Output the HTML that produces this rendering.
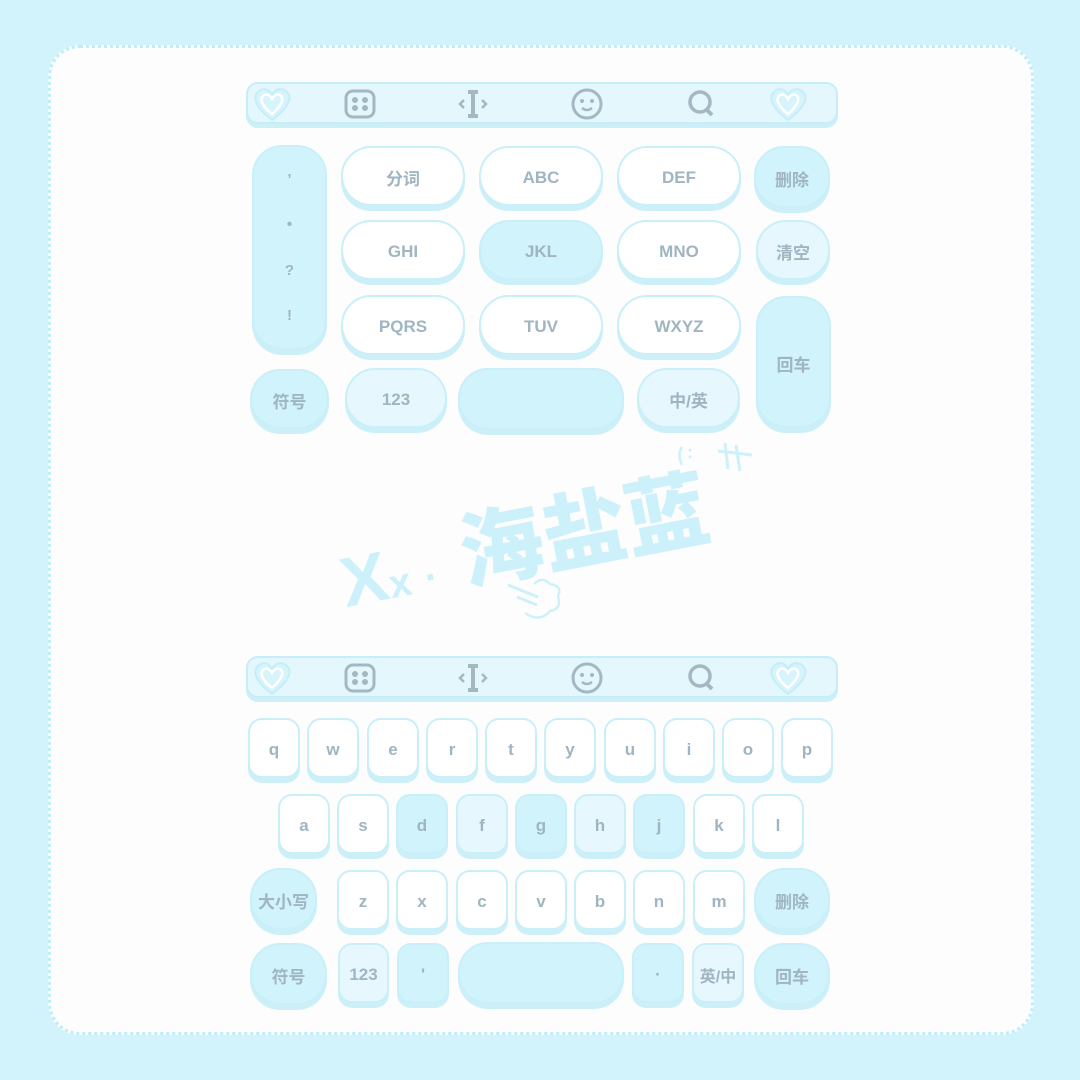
<!DOCTYPE html><html><head><meta charset="utf-8"><style>
body{margin:0;width:1080px;height:1080px;background:#d3f3fc;position:relative;overflow:hidden;font-family:"Liberation Sans","Noto Sans CJK SC",sans-serif;}
.card{position:absolute;left:48px;top:45px;width:980px;height:984px;background:#fdfdfd;border:3px dotted #bdeef9;border-radius:32px;}
.k{position:absolute;box-sizing:border-box;background:#fff;border:2px solid #c9eff9;box-shadow:0 5px 0 #cdeff8;border-radius:30px;display:flex;align-items:center;justify-content:center;color:#9fb5c1;font-weight:bold;font-size:17px;padding-top:3px;}
.b{background:#d0f3fc;}
.l{background:#e6f8fd;}
.s{border-radius:14px;font-size:17px;}
.bar{position:absolute;left:246px;width:592px;height:42px;box-sizing:border-box;background:#e3f7fd;border:2px solid #c6eef9;box-shadow:0 4px 0 #cdeff8;border-radius:12px;}
.wm{position:absolute;left:348px;color:#cdf1fb;font-weight:900;transform:rotate(-11deg);transform-origin:left bottom;white-space:nowrap;line-height:1;}
</style></head><body>
<div class="card"></div>

<svg width="0" height="0" style="position:absolute"><defs>
<g id="ht"><path d="M20 36C4 24 0 14 6 8c5-5 11-3 14 3c3-6 10-8 15-3c6 6 1 16-15 28z" fill="#d7f4fc" stroke="#c4eef9" stroke-width="2"/><path d="M20 30C9 21 8 15 11 12c3-3 7-1 9 3c2-4 6-6 9-3c3 3 1 9-9 18z" fill="none" stroke="#fff" stroke-width="2.5"/></g>
<g id="tb">
<rect x="92" y="9" width="28" height="26" rx="7" fill="none" stroke="#a3b8c3" stroke-width="3"/>
<circle cx="101" cy="18" r="3" fill="#a3b8c3"/><circle cx="111" cy="18" r="3" fill="#a3b8c3"/><circle cx="101" cy="26" r="3" fill="#a3b8c3"/><circle cx="111" cy="26" r="3" fill="#a3b8c3"/>
<path d="M219 12v20M214 10h10M214 34h10" stroke="#a3b8c3" stroke-width="4" fill="none"/><path d="M210 18l-4 4 4 4M228 18l4 4-4 4" stroke="#a3b8c3" stroke-width="2.5" fill="none"/>
<circle cx="333" cy="22" r="14" fill="none" stroke="#a3b8c3" stroke-width="3"/><circle cx="328" cy="19" r="2" fill="#a3b8c3"/><circle cx="338" cy="19" r="2" fill="#a3b8c3"/><path d="M328 26q5 4 10 0" stroke="#a3b8c3" stroke-width="2.5" fill="none"/>
<circle cx="446" cy="20" r="10" fill="none" stroke="#a3b8c3" stroke-width="3.5"/><path d="M452 27l6 6" stroke="#a3b8c3" stroke-width="4"/>
</g></defs></svg>

<div class="bar" style="top:82px"><svg width="592" height="42" style="position:absolute;left:-2px;top:-2px"><use href="#tb" x="8" y="0"/><use href="#ht" x="6" y="2"/><use href="#ht" x="522" y="2"/></svg></div>
<div class="bar" style="top:656px"><svg width="592" height="42" style="position:absolute;left:-2px;top:-2px"><use href="#tb" x="8" y="0"/><use href="#ht" x="6" y="2"/><use href="#ht" x="522" y="2"/></svg></div>

<!-- 9-key -->
<div class="k b" style="left:252px;top:145px;width:75px;height:205px;flex-direction:column;justify-content:space-around;font-size:15px;padding:10px 0"><span>’</span><span>•</span><span>?</span><span>!</span></div>
<div class="k" style="left:341px;top:146px;width:124px;height:60px">分词</div>
<div class="k" style="left:479px;top:146px;width:124px;height:60px">ABC</div>
<div class="k" style="left:617px;top:146px;width:124px;height:60px">DEF</div>
<div class="k b" style="left:754px;top:146px;width:76px;height:62px">删除</div>
<div class="k" style="left:341px;top:220px;width:124px;height:60px">GHI</div>
<div class="k b" style="left:479px;top:220px;width:124px;height:60px">JKL</div>
<div class="k" style="left:617px;top:220px;width:124px;height:60px">MNO</div>
<div class="k l" style="left:756px;top:220px;width:74px;height:60px">清空</div>
<div class="k" style="left:341px;top:295px;width:124px;height:60px">PQRS</div>
<div class="k" style="left:479px;top:295px;width:124px;height:60px">TUV</div>
<div class="k" style="left:617px;top:295px;width:124px;height:60px">WXYZ</div>
<div class="k b" style="left:756px;top:296px;width:75px;height:132px">回车</div>
<div class="k b" style="left:250px;top:369px;width:79px;height:60px">符号</div>
<div class="k l" style="left:345px;top:368px;width:102px;height:60px">123</div>
<div class="k b" style="left:458px;top:368px;width:166px;height:62px"></div>
<div class="k l" style="left:637px;top:368px;width:103px;height:60px">中/英</div>

<div class="wm" style="top:530px"><span style="font-size:70px">X</span><span style="font-size:40px">x</span><span style="font-size:40px;margin:0 26px 0 14px">·</span><span style="font-size:84px;font-family:'Noto Sans CJK SC',sans-serif;font-weight:900">海盐蓝</span></div>
<svg style="position:absolute;left:500px;top:435px" width="260" height="190"><path d="M218 16l34 4M225 8l3 26M236 10l4 26" stroke="#cdf1fb" stroke-width="3"/><path d="M182 12q-5 8 0 18" stroke="#cdf1fb" stroke-width="2.5" fill="none"/><circle cx="190" cy="15" r="1.5" fill="#cdf1fb"/><circle cx="190" cy="22" r="1.5" fill="#cdf1fb"/><path d="M8 150l30 12M17 162l20 8" stroke="#cdf1fb" stroke-width="3"/><path d="M25 178q15 10 25-2q12-2 8-15q5-10-8-12q-8-8-16 0" stroke="#cdf1fb" stroke-width="2.5" fill="none"/></svg>

<!-- qwerty -->
<div class="k s" style="left:248px;top:718px;width:52px;height:60px">q</div>
<div class="k s" style="left:307px;top:718px;width:52px;height:60px">w</div>
<div class="k s" style="left:367px;top:718px;width:52px;height:60px">e</div>
<div class="k s" style="left:426px;top:718px;width:52px;height:60px">r</div>
<div class="k s" style="left:485px;top:718px;width:52px;height:60px">t</div>
<div class="k s" style="left:544px;top:718px;width:52px;height:60px">y</div>
<div class="k s" style="left:604px;top:718px;width:52px;height:60px">u</div>
<div class="k s" style="left:663px;top:718px;width:52px;height:60px">i</div>
<div class="k s" style="left:722px;top:718px;width:52px;height:60px">o</div>
<div class="k s" style="left:781px;top:718px;width:52px;height:60px">p</div>
<div class="k s" style="left:278px;top:794px;width:52px;height:60px">a</div>
<div class="k s" style="left:337px;top:794px;width:52px;height:60px">s</div>
<div class="k s b" style="left:396px;top:794px;width:52px;height:60px">d</div>
<div class="k s l" style="left:456px;top:794px;width:52px;height:60px">f</div>
<div class="k s b" style="left:515px;top:794px;width:52px;height:60px">g</div>
<div class="k s l" style="left:574px;top:794px;width:52px;height:60px">h</div>
<div class="k s b" style="left:633px;top:794px;width:52px;height:60px">j</div>
<div class="k s" style="left:693px;top:794px;width:52px;height:60px">k</div>
<div class="k s" style="left:752px;top:794px;width:52px;height:60px">l</div>
<div class="k b" style="left:250px;top:868px;width:67px;height:62px">大小写</div>
<div class="k s" style="left:337px;top:870px;width:52px;height:60px">z</div>
<div class="k s" style="left:396px;top:870px;width:52px;height:60px">x</div>
<div class="k s" style="left:456px;top:870px;width:52px;height:60px">c</div>
<div class="k s" style="left:515px;top:870px;width:52px;height:60px">v</div>
<div class="k s" style="left:574px;top:870px;width:52px;height:60px">b</div>
<div class="k s" style="left:633px;top:870px;width:52px;height:60px">n</div>
<div class="k s" style="left:693px;top:870px;width:52px;height:60px">m</div>
<div class="k b" style="left:754px;top:868px;width:76px;height:62px">删除</div>
<div class="k b" style="left:250px;top:943px;width:77px;height:62px">符号</div>
<div class="k s l" style="left:338px;top:943px;width:51px;height:60px">123</div>
<div class="k s b" style="left:397px;top:943px;width:52px;height:60px">'</div>
<div class="k b" style="left:458px;top:942px;width:166px;height:62px"></div>
<div class="k s b" style="left:632px;top:943px;width:52px;height:60px">·</div>
<div class="k s l" style="left:692px;top:943px;width:52px;height:60px;font-size:16px">英/中</div>
<div class="k b" style="left:754px;top:943px;width:76px;height:62px">回车</div>
</body></html>
